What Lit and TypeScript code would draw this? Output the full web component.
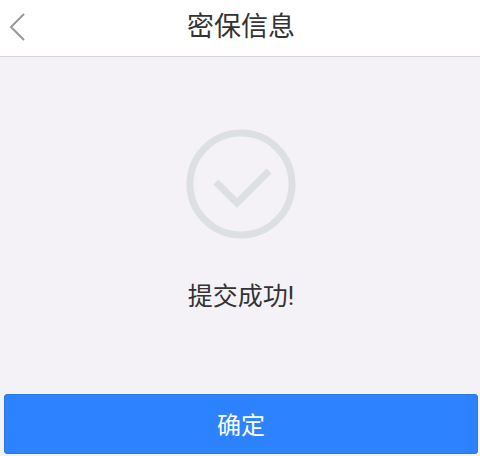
import { LitElement, html, css } from "lit";
import { customElement } from "lit/decorators.js";

@customElement("app-root")
export class AppRoot extends LitElement {
  static styles = css`
    :host {
      display: flex;
      flex-direction: column;
      min-height: 100vh;
      background: #f4f2f6;
      color: #333;
      font-family: Roboto, "Noto Sans CJK SC", sans-serif;
    }
    header {
      display: grid;
      grid-template-columns: 48px 1fr 46px;
      align-items: center;
      height: 56px;
      background: #fff;
      border-bottom: 1px solid #d8d6d9;
    }
    .back {
      display: flex;
      padding: 8px;
      border: 0;
      background: none;
      color: #999;
    }
    .title {
      margin: 0;
      padding-bottom: 2px;
      text-align: center;
      font-size: 27px;
      line-height: 40px;
      font-weight: 400;
    }
    main {
      flex: 1;
      display: flex;
      flex-direction: column;
      align-items: center;
      padding: 70px 2px 0 4px;
    }
    .message {
      margin: 38px 0 0;
      font-size: 25px;
      line-height: 40px;
    }
    .footer {
      padding: 0 2px 2px 4px;
    }
    .confirm {
      display: block;
      width: 100%;
      height: 60px;
      padding: 0 0 2px;
      border: 1px solid #2879e8;
      border-radius: 3px;
      background: #2d82ff;
      color: #fff;
      font-family: inherit;
      font-size: 24px;
    }
  `;

  render() {
    return html`
      <header>
        <button class="back" aria-label="返回">
          <svg width="20" height="32" viewBox="0 0 20 32" fill="none" stroke="currentColor" stroke-width="2">
            <path d="M16 2 L3 15 L16 28" />
          </svg>
        </button>
        <h1 class="title">密保信息</h1>
      </header>
      <main>
        <svg width="112" height="112" viewBox="0 0 112 112" fill="none" stroke="#dde0e2" aria-hidden="true">
          <circle cx="56" cy="57" r="51" stroke-width="7" />
          <path d="M31 55 L52 76 L84 44" stroke-width="7" />
        </svg>
        <p class="message">提交成功!</p>
      </main>
      <div class="footer">
        <button class="confirm">确定</button>
      </div>
    `;
  }
}
